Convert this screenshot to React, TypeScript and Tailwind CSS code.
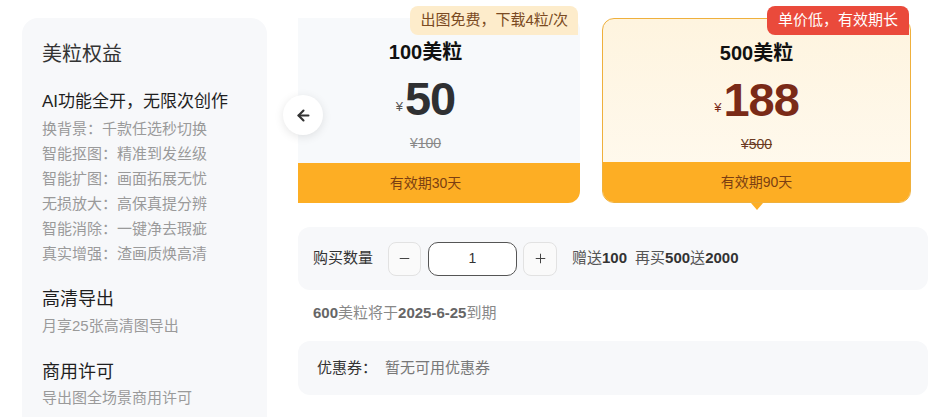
import { ArrowLeft, Minus, Plus } from 'lucide-react';

const features = [
    '换背景：千款任选秒切换',
    '智能抠图：精准到发丝级',
    '智能扩图：画面拓展无忧',
    '无损放大：高保真提分辨',
    '智能消除：一键净去瑕疵',
    '真实增强：渣画质焕高清',
];

function PackCard({
    title,
    price,
    origin,
    period,
    highlight,
}: {
    title: string;
    price: string;
    origin: string;
    period: string;
    highlight?: boolean;
}) {
    return (
        <div
            className={
                highlight
                    ? 'w-[309px] h-[185px] shrink-0 flex flex-col rounded-xl overflow-hidden border-[1.5px] border-[#efb03c] bg-gradient-to-b from-[#fef4df] to-[#fffaf0]'
                    : 'w-[309px] h-[185px] shrink-0 flex flex-col rounded-xl overflow-hidden bg-[#f7f9fb]'
            }
        >
            <div className="flex-1 flex flex-col items-center pt-[20px]">
                <div className="text-[20px] leading-[28px] font-bold text-[#111]">{title}</div>
                <div className="mt-[8px] h-[50px] flex items-end">
                    <span className={`text-[13px] mb-[8px] mr-[2px] ${highlight ? 'text-[#7a2a17]' : 'text-[#555]'}`}>¥</span>
                    <span
                        className={`text-[47px] leading-[50px] font-bold tracking-[-1px] ${highlight ? 'text-[#7a2a17]' : 'text-[#2f3032]'}`}
                    >
                        {price}
                    </span>
                </div>
                <div className={`mt-[10px] text-[14px] leading-[18px] line-through ${highlight ? 'text-[#6b3a22]' : 'text-[#888]'}`}>
                    ¥{origin}
                </div>
            </div>
            <div className="h-[40px] shrink-0 flex items-center justify-center bg-[#fdae24] text-[14px] text-[#7b3f12]">
                {period}
            </div>
        </div>
    );
}

export default function App() {
    return (
        <div className="w-[943px] h-[417px] overflow-hidden bg-white flex font-['Liberation_Sans','Noto_Sans_CJK_SC',sans-serif]">
            <aside className="ml-[22px] mt-[18px] w-[245px] h-[420px] shrink-0 rounded-2xl bg-[#f7f8fa] pl-5 pt-[24px]">
                <h2 className="text-[20px] leading-[24px] text-[#333]">美粒权益</h2>
                <h3 className="mt-[24px] text-[17px] leading-[24px] text-[#1f1f1f]">AI功能全开，无限次创作</h3>
                <ul className="mt-[2px]">
                    {features.map((f) => (
                        <li key={f} className="text-[15px] leading-[25px] text-[#9a9a9a]">
                            {f}
                        </li>
                    ))}
                </ul>
                <h3 className="mt-[20px] text-[18px] leading-[26px] text-[#1f1f1f]">高清导出</h3>
                <p className="mt-[1px] text-[15px] leading-[25px] text-[#9a9a9a]">月享25张高清图导出</p>
                <h3 className="mt-[21px] text-[18px] leading-[26px] text-[#1f1f1f]">商用许可</h3>
                <p className="text-[15px] leading-[25px] text-[#9a9a9a]">导出图全场景商用许可</p>
            </aside>

            <main className="ml-[31px] w-[630px] shrink-0 relative">
                <div className="h-[212px] overflow-hidden pt-[18px]">
                    <div className="flex gap-[22px] -ml-[27px]">
                        <div className="relative">
                            <PackCard title="100美粒" price="50" origin="100" period="有效期30天" />
                            <div className="absolute -top-[12px] right-[2px] h-[29px] px-[10px] flex items-center rounded-t-lg rounded-bl-lg bg-[#fdeccb] text-[15px] text-[#7a4a22]">
                                出图免费，下载4粒/次
                            </div>
                        </div>
                        <div className="relative">
                            <PackCard title="500美粒" price="188" origin="500" period="有效期90天" highlight />
                            <div className="absolute -top-[12px] right-[2px] h-[29px] px-[11px] flex items-center rounded-t-lg rounded-bl-lg bg-[#ea4a3b] text-[15px] text-white">
                                单价低，有效期长
                            </div>
                            <div className="absolute left-1/2 -translate-x-1/2 -bottom-[7px] w-0 h-0 border-l-[6px] border-r-[6px] border-t-[7px] border-l-transparent border-r-transparent border-t-[#fdae24]" />
                        </div>
                    </div>
                </div>

                <button className="absolute -left-[15px] top-[95px] w-[40px] h-[40px] rounded-full bg-white shadow-[0_2px_10px_rgba(0,0,0,0.1)] flex items-center justify-center text-[#333]">
                    <ArrowLeft size={17} strokeWidth={3} />
                </button>

                <div className="mt-[15px] h-[63px] rounded-xl bg-[#f7f8fa] flex items-center px-[15px] text-[15px]">
                    <span className="text-[#333]">购买数量</span>
                    <button className="ml-[15px] w-[33px] h-[34px] rounded-lg border border-[#e2e2e2] bg-[#fafafa] flex items-center justify-center text-[#444]">
                        <Minus size={15} strokeWidth={1.6} />
                    </button>
                    <div className="ml-[7px] w-[89px] h-[34px] rounded-[10px] border border-[#555] bg-white flex items-center justify-center text-[14px] text-[#333]">
                        1
                    </div>
                    <button className="ml-[6px] w-[34px] h-[34px] rounded-lg border border-[#e2e2e2] bg-[#fafafa] flex items-center justify-center text-[#444]">
                        <Plus size={15} strokeWidth={1.6} />
                    </button>
                    <span className="ml-[15px] text-[#555]">
                        赠送<b className="text-[#333]">100</b>
                    </span>
                    <span className="ml-[8px] text-[#555]">
                        再买<b className="text-[#333]">500</b>送<b className="text-[#333]">2000</b>
                    </span>
                </div>

                <p className="mt-[13px] pl-[15px] text-[15px] leading-[20px] text-[#888]">
                    <b className="text-[#666]">600</b>美粒将于<b className="text-[#666]">2025-6-25</b>到期
                </p>

                <div className="mt-[18px] h-[54px] rounded-xl bg-[#f7f8fa] flex items-center px-[19px] text-[15px]">
                    <span className="text-[#333]">优惠券：</span>
                    <span className="ml-[8px] text-[#777]">暂无可用优惠券</span>
                </div>
            </main>
        </div>
    );
}
